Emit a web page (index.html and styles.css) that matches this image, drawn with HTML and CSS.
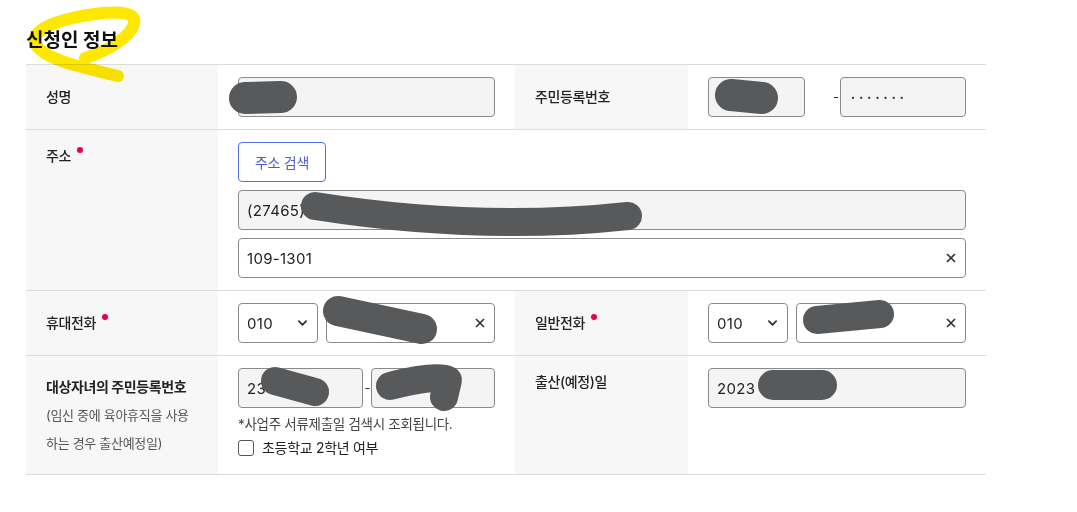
FILE: index.html
```html
<!DOCTYPE html>
<html lang="ko">
<head>
<meta charset="utf-8">
<title>신청인 정보</title>
<link rel="stylesheet" href="styles.css">
</head>
<body>
<div class="page">
  <h2 class="title">신청인 정보</h2>
  <div class="form">
    <div class="row">
      <div class="th">성명</div>
      <div class="td">
        <div class="field dis"></div>
      </div>
      <div class="th">주민등록번호</div>
      <div class="td">
        <div class="jumin">
          <div class="field dis j1"></div>
          <span class="dash dash-wide">-</span>
          <div class="field dis grow"><span class="dots">•••••••</span></div>
        </div>
      </div>
    </div>

    <div class="row row-wide">
      <div class="th th-top"><span>주소<span class="req"></span></span></div>
      <div class="td stack">
        <button class="btn-outline" type="button">주소 검색</button>
        <div class="field dis">(27465)</div>
        <div class="field"><span class="grow">109-1301</span>
          <svg class="clear" viewBox="0 0 10 10" width="10" height="10"><path d="M1 1L9 9M9 1L1 9"/></svg>
        </div>
      </div>
    </div>

    <div class="row">
      <div class="th"><span>휴대전화<span class="req"></span></span></div>
      <div class="td">
        <div class="phone">
          <div class="field select"><span class="grow">010</span>
            <svg class="chev" viewBox="0 0 10 6" width="9" height="6"><path d="M1 1L5 5L9 1"/></svg>
          </div>
          <div class="field grow"><span class="grow"></span>
            <svg class="clear" viewBox="0 0 10 10" width="10" height="10"><path d="M1 1L9 9M9 1L1 9"/></svg>
          </div>
        </div>
      </div>
      <div class="th"><span>일반전화<span class="req"></span></span></div>
      <div class="td">
        <div class="phone">
          <div class="field select"><span class="grow">010</span>
            <svg class="chev" viewBox="0 0 10 6" width="9" height="6"><path d="M1 1L5 5L9 1"/></svg>
          </div>
          <div class="field grow"><span class="grow"></span>
            <svg class="clear" viewBox="0 0 10 10" width="10" height="10"><path d="M1 1L9 9M9 1L1 9"/></svg>
          </div>
        </div>
      </div>
    </div>

    <div class="row">
      <div class="th th-multi">
        <div class="multi">
          <div class="strong">대상자녀의 주민등록번호</div>
          <div class="sub">(임신 중에 육아휴직을 사용</div>
          <div class="sub">하는 경우 출산예정일)</div>
        </div>
      </div>
      <div class="td td-child">
        <div class="jumin">
          <div class="field dis half">23</div>
          <span class="dash">-</span>
          <div class="field dis half"></div>
        </div>
        <p class="note">*사업주 서류제출일 검색시 조회됩니다.</p>
        <label class="check"><span class="box"></span>초등학교 2학년 여부</label>
      </div>
      <div class="th th-top">출산(예정)일</div>
      <div class="td">
        <div class="field dis">2023</div>
      </div>
    </div>
  </div>

  <svg class="overlay hl" viewBox="0 0 1077 512" width="1077" height="512" aria-hidden="true">
    <path d="M118,76 C90,69 46,61 36,45 C28,30 58,19 95,14 C120,11 137,12 134,24 C130,38 105,52 85,58"/>
  </svg>
  <svg class="overlay redact" viewBox="0 0 1077 512" width="1077" height="512" aria-hidden="true">
    <path d="M245,98 L281,97" stroke-width="32"/>
    <path d="M731,95 L762,98" stroke-width="32"/>
    <path d="M315,206 Q480,232 628,216" stroke-width="28"/>
    <path d="M338,311 L422,329" stroke-width="30"/>
    <path d="M817,320 L880,314" stroke-width="28"/>
    <path d="M275,381 L315,392" stroke-width="28"/>
    <path d="M390,386 Q436,374 448,380 L444,397" stroke-width="28"/>
    <path d="M773,385 L822,385" stroke-width="30"/>
  </svg>
</div>
</body>
</html>
```

FILE: styles.css
```css
* { box-sizing: border-box; }

html, body {
  margin: 0;
  padding: 0;
  background: #fff;
}

body {
  font-family: Inter, "Noto Sans CJK KR", sans-serif;
  color: #1e1e1e;
}

.page {
  position: relative;
  width: 1077px;
  height: 512px;
  padding-left: 26px;
  overflow: hidden;
}

.title {
  margin: 0;
  padding-top: 27px;
  height: 64px;
  font-size: 19px;
  line-height: 28px;
  font-weight: 700;
  color: #111;
  letter-spacing: 0;
}

.form {
  width: 960px;
  border-top: 1px solid #dcdcdc;
}

.row {
  display: grid;
  grid-template-columns: 192px 297px 173px 298px;
  border-bottom: 1px solid #dcdcdc;
}

.row-wide {
  grid-template-columns: 192px 1fr;
}

.th {
  background: #f7f7f7;
  padding: 0 20px;
  display: flex;
  align-items: center;
  font-size: 14px;
  letter-spacing: -0.4px;
  font-weight: 500;
  color: #222;
  line-height: 20px;
}

.th-top {
  align-items: flex-start;
  padding-top: 16px;
}

.th-multi {
  align-items: flex-start;
  padding-top: 17px;
}

.multi {
  line-height: 28px;
}

.multi .strong {
  font-weight: 700;
  font-size: 14px;
}

.multi .sub {
  font-size: 13px;
  color: #555;
  font-weight: 400;
  letter-spacing: -0.3px;
}

.req {
  display: inline-block;
  width: 6px;
  height: 6px;
  border-radius: 50%;
  background: #e4004f;
  margin-left: 6px;
  vertical-align: 8px;
}

.td {
  padding: 12px 20px;
  min-width: 0;
}

.stack {
  display: flex;
  flex-direction: column;
  gap: 8px;
  align-items: stretch;
}

.field {
  height: 40px;
  border: 1px solid #8a8a8a;
  border-radius: 4px;
  background: #fff;
  display: flex;
  align-items: center;
  padding: 0 9px 0 8px;
  font-size: 15px;
  letter-spacing: 0.3px;
  color: #222;
  min-width: 0;
}

.field.dis {
  background: #f4f4f4;
}

.grow {
  flex: 1 1 auto;
  min-width: 0;
}

.half {
  flex: 1 1 0;
  min-width: 0;
}

.jumin {
  display: flex;
  align-items: center;
}

.j1 {
  width: 97px;
  flex: 0 0 97px;
}

.dash {
  font-size: 13px;
  color: #333;
  margin: 0 2px;
  width: 4px;
  text-align: center;
}

.dash-wide {
  margin-left: 28px;
  margin-right: 3px;
}

.dots {
  font-size: 7px;
  letter-spacing: 4.2px;
  color: #3a3a48;
  padding-left: 2px;
}

.btn-outline {
  align-self: flex-start;
  width: 88px;
  height: 40px;
  border: 1px solid #5470e8;
  border-radius: 4px;
  background: #fff;
  color: #4c5bd6;
  font-family: Inter, "Noto Sans CJK KR", sans-serif;
  font-size: 14px;
  letter-spacing: -0.3px;
  padding: 0;
}

.clear {
  flex: 0 0 auto;
  fill: none;
  stroke: #333;
  stroke-width: 1.7;
  margin-left: 6px;
}

.phone {
  display: flex;
  gap: 8px;
}

.select {
  width: 80px;
  flex: 0 0 80px;
}

.chev {
  flex: 0 0 auto;
  fill: none;
  stroke: #333;
  stroke-width: 2;
  stroke-linecap: round;
  stroke-linejoin: round;
  margin-right: 1px;
}

.td-child {
  padding-bottom: 16px;
}

.note {
  margin: 6px 0 0;
  font-size: 13.5px;
  letter-spacing: -0.3px;
  line-height: 20px;
  color: #444;
}

.check {
  display: flex;
  align-items: center;
  gap: 8px;
  margin-top: 4px;
  font-size: 14px;
  letter-spacing: -0.3px;
  line-height: 20px;
  color: #222;
}

.box {
  width: 16px;
  height: 16px;
  border: 1px solid #555;
  border-radius: 3px;
  background: #fff;
  flex: 0 0 16px;
}

.overlay {
  position: absolute;
  left: 0;
  top: 0;
  pointer-events: none;
}

.hl path {
  fill: none;
  stroke: #ffe800;
  stroke-width: 12;
  stroke-linecap: round;
  stroke-linejoin: round;
}

.hl {
  mix-blend-mode: multiply;
}

.redact path {
  fill: none;
  stroke: #58595b;
  stroke-linecap: round;
  stroke-linejoin: round;
}
```
